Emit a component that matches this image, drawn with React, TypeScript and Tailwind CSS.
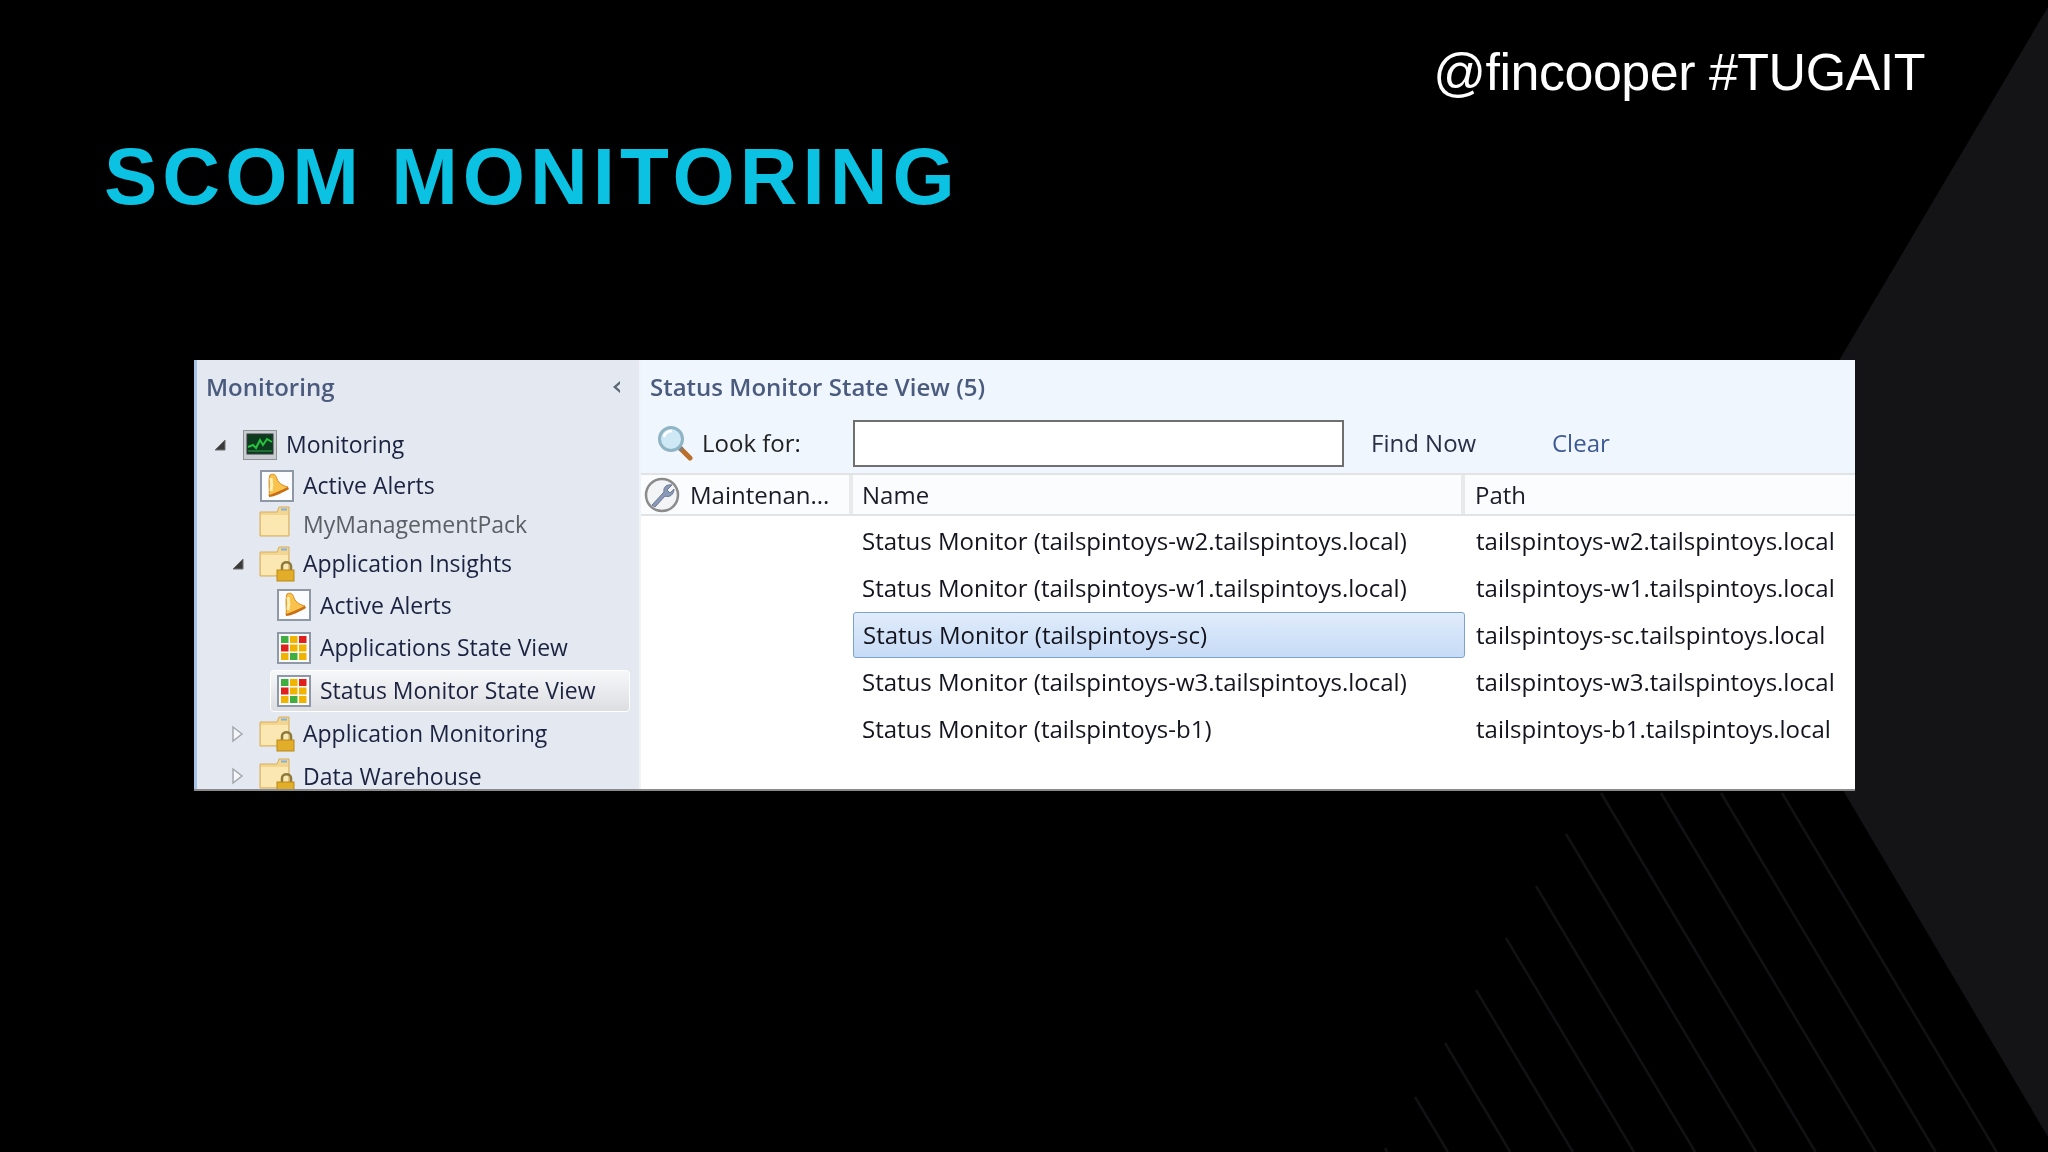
const uiFont = "font-['Open_Sans','Noto_Sans',sans-serif]";

const Triangle = ({ open, className }: { open: boolean; className: string }) =>
  open ? (
    <svg viewBox="0 0 14 14" className={`w-[14px] h-[14px] shrink-0 ${className}`}>
      <path d="M12 2V12H2Z" fill="#3a3a3a" stroke="#6e6e6e" />
    </svg>
  ) : (
    <svg viewBox="0 0 14 18" className={`w-[14px] h-[18px] shrink-0 ${className}`}>
      <path d="M2 2L11 9L2 16Z" fill="#f4f6fa" stroke="#a4a8ae" strokeWidth="1.5" />
    </svg>
  );

const MonitorIcon = () => (
  <svg viewBox="0 0 34 30" className="w-[34px] h-[30px] shrink-0">
    <rect x="0.5" y="0.5" width="33" height="29" fill="#c9ccd0" stroke="#8f9295" />
    <rect x="4" y="4" width="26" height="20" fill="#0d3b1e" stroke="#33383a" />
    <path d="M5 17L10 15L13 18L17 10L20 15L24 9L29 12" fill="none" stroke="#27c23f" strokeWidth="2" />
    <path d="M5 21H29" stroke="#1d6f33" strokeWidth="2" />
  </svg>
);

const BellIcon = () => (
  <svg viewBox="0 0 34 32" className="w-[34px] h-[32px] shrink-0">
    <rect x="1" y="1" width="32" height="30" fill="#fbfcfe" stroke="#8e98a6" strokeWidth="2" />
    <path d="M10 5C14 3 16 5 17 9C19 14 24 16 28 17C24 20 14 24 9 26C10 20 8 10 10 5Z" fill="#f8c24d" stroke="#d98a20" />
    <path d="M9 25C13 24 22 20 28 17L29 19C24 22 14 27 9 27Z" fill="#c86f14" />
    <path d="M11 8C12 12 12 17 11 21" stroke="#fdeeb0" strokeWidth="3" fill="none" />
  </svg>
);

const GridIcon = () => {
  const cells = ["#3fae3f", "#f0b400", "#e0201c", "#e0201c", "#f0b400", "#f0b400", "#f0b400", "#3fae3f", "#f0b400"];
  return (
    <svg viewBox="0 0 34 32" className="w-[34px] h-[32px] shrink-0">
      <rect x="1" y="1" width="32" height="30" fill="#fbfcfe" stroke="#8e98a6" strokeWidth="2" />
      {cells.map((c, i) => (
        <rect key={i} x={4 + (i % 3) * 9} y={4 + Math.floor(i / 3) * 8.5} width="7.5" height="7" fill={c} />
      ))}
    </svg>
  );
};

const FolderIcon = ({ lock }: { lock?: boolean }) => (
  <svg viewBox="0 0 36 36" className="w-[36px] h-[36px] shrink-0 overflow-visible">
    <path d="M1 6H18L20 1H30V30H1Z" fill="#f3d58e" stroke="#d9ae5d" />
    <path d="M2 9H29V29H2Z" fill="#fbe7b2" />
    <rect x="22" y="2.5" width="6" height="2" fill="#7fb2e6" />
    {lock && (
      <g>
        <path d="M23 24V20C23 15 32 15 32 20V24" fill="none" stroke="#8d7a3b" strokeWidth="2.5" />
        <rect x="18" y="24" width="17" height="11" fill="#e2ad28" stroke="#b98717" />
      </g>
    )}
  </svg>
);

const MagnifierIcon = () => (
  <svg viewBox="0 0 36 36" className="w-[36px] h-[36px] shrink-0">
    <path d="M22 22L33 33" stroke="#b9702a" strokeWidth="5" strokeLinecap="round" />
    <path d="M21 21L25 25" stroke="#7f7f7f" strokeWidth="5" />
    <circle cx="14" cy="14" r="11.5" fill="#cfe8f5" stroke="#8fb4c4" strokeWidth="3" />
    <path d="M7 12C8 8 11 6 15 6" stroke="#ffffff" strokeWidth="2.5" fill="none" />
  </svg>
);

const WrenchIcon = () => (
  <svg viewBox="0 0 36 36" className="w-[36px] h-[36px] shrink-0">
    <circle cx="18" cy="18" r="16" fill="#f3f4f6" stroke="#8b8b8b" strokeWidth="2.5" />
    <path d="M8 28L20 15C19 10 23 7 28 8L23 13L26 16L30 12C30 17 26 21 21 19L11 30Z" fill="#8b9ab8" stroke="#6b7790" />
  </svg>
);

type TreeRow = {
  label: string;
  indent: string;
  height: string;
  icon: "monitor" | "bell" | "grid" | "folder" | "lockfolder";
  caret?: "open" | "closed";
  muted?: boolean;
  selected?: boolean;
};

const treeRows: TreeRow[] = [
  { label: "Monitoring", indent: "pl-[46px]", height: "h-[43px]", icon: "monitor" },
  { label: "Active Alerts", indent: "pl-[63px]", height: "h-[39px]", icon: "bell" },
  { label: "MyManagementPack", indent: "pl-[63px]", height: "h-[38px]", icon: "folder", muted: true },
  { label: "Application Insights", indent: "pl-[63px]", height: "h-[41px]", icon: "lockfolder", caret: "open" },
  { label: "Active Alerts", indent: "pl-[80px]", height: "h-[42px]", icon: "bell" },
  { label: "Applications State View", indent: "pl-[80px]", height: "h-[43px]", icon: "grid" },
  { label: "Status Monitor State View", indent: "pl-[80px]", height: "h-[43px]", icon: "grid", selected: true },
  { label: "Application Monitoring", indent: "pl-[63px]", height: "h-[43px]", icon: "lockfolder", caret: "closed" },
  { label: "Data Warehouse", indent: "pl-[63px]", height: "h-[42px]", icon: "lockfolder", caret: "closed" },
];

const tableRows = [
  { name: "Status Monitor (tailspintoys-w2.tailspintoys.local)", path: "tailspintoys-w2.tailspintoys.local" },
  { name: "Status Monitor (tailspintoys-w1.tailspintoys.local)", path: "tailspintoys-w1.tailspintoys.local" },
  { name: "Status Monitor (tailspintoys-sc)", path: "tailspintoys-sc.tailspintoys.local", selected: true },
  { name: "Status Monitor (tailspintoys-w3.tailspintoys.local)", path: "tailspintoys-w3.tailspintoys.local" },
  { name: "Status Monitor (tailspintoys-b1)", path: "tailspintoys-b1.tailspintoys.local" },
];

const TreeIcon = ({ icon }: { icon: TreeRow["icon"] }) => {
  if (icon === "monitor") return <MonitorIcon />;
  if (icon === "bell") return <BellIcon />;
  if (icon === "grid") return <GridIcon />;
  if (icon === "lockfolder") return <FolderIcon lock />;
  return <FolderIcon />;
};

const Sidebar = () => (
  <aside className="w-[447px] h-full bg-[#e3e8f1] border-l-[3px] border-[#a5c3e6] overflow-hidden shrink-0 border-r-2 border-r-[#f0f3f8]">
    <div className="h-[54px] flex items-center justify-between pl-[9px] pr-[17px]">
      <span className="text-[24px] font-semibold text-[#4a5b7e]">Monitoring</span>
      <svg viewBox="0 0 12 14" className="w-[12px] h-[14px]">
        <path d="M10 1L3 7L10 13V10L6.5 7L10 4Z" fill="#5d6675" />
      </svg>
    </div>
    <div className="h-[9px]" />
    {treeRows.map((row, i) => (
      <div key={i} className={`relative flex items-center ${row.height} ${row.indent}`}>
        {row.selected && (
          <div className="absolute left-[73px] right-[9px] top-[1px] bottom-0 rounded-[4px] border border-white bg-gradient-to-b from-[#f6f7f9] to-[#dcdee2]" />
        )}
        {row.caret && (
          <Triangle open={row.caret === "open"} className="absolute left-[34px]" />
        )}
        {i === 0 && <Triangle open className="absolute left-[16px]" />}
        <div className="relative flex items-center gap-[9px]">
          <div className="w-[34px] flex justify-center"><TreeIcon icon={row.icon} /></div>
          <span className={`text-[23px] whitespace-nowrap ${row.muted ? "text-[#5c6066]" : "text-[#1c2340]"}`}>
            {row.label}
          </span>
        </div>
      </div>
    ))}
  </aside>
);

const ResultsPane = () => (
  <section className="flex-1 min-w-0 h-full flex flex-col bg-white">
    <div className="bg-[#f0f6fe]">
      <div className="h-[54px] flex items-center pl-[9px]">
        <span className="text-[24px] font-semibold text-[#4a5b7e] whitespace-nowrap">Status Monitor State View (5)</span>
      </div>
      <div className="h-[59px] flex items-center pb-[1px]">
        <div className="w-[212px] flex items-center pl-[16px] gap-[9px]">
          <MagnifierIcon />
          <span className="text-[24px] text-[#222]">Look for:</span>
        </div>
        <div className="w-[491px] h-[47px] bg-white border-2 border-[#6f6f6f]" />
        <span className="ml-[27px] w-[181px] text-[24px] text-[#2a2f45]">Find Now</span>
        <span className="text-[24px] text-[#3d5a94]">Clear</span>
      </div>
    </div>
    <div className="h-[43px] flex bg-[#fbfcfe] border-y-2 border-[#e2e3e5] text-[24px] text-[#1c1c28] shrink-0">
      <div className="w-[212px] flex items-center gap-[10px] pl-[3px] border-r-4 border-[#e8e9eb]">
        <WrenchIcon />
        <span>Maintenan...</span>
      </div>
      <div className="w-[612px] flex items-center pl-[9px] border-r-4 border-[#e8e9eb]">Name</div>
      <div className="flex-1 flex items-center pl-[10px]">Path</div>
    </div>
    <div className="pt-[1px] text-[24px] text-[#14141e]">
      {tableRows.map((row) => (
        <div key={row.path} className="h-[47px] flex items-center">
          <div className="w-[212px]" />
          <div
            className={`w-[612px] h-[46px] flex items-center pl-[9px] whitespace-nowrap rounded-[3px] ${
              row.selected ? "border border-[#7da2ce] bg-gradient-to-b from-[#e0ecfb] to-[#c6dbf6]" : ""
            }`}
          >
            {row.name}
          </div>
          <div className="flex-1 pl-[11px] whitespace-nowrap">{row.path}</div>
        </div>
      ))}
    </div>
  </section>
);

export default function App() {
  const stripes = [
    [1601, 793], [1661, 793], [1721, 793], [1782, 793],
    [1566, 834], [1536, 886], [1506, 938], [1476, 990],
    [1445, 1043], [1415, 1097], [1385, 1148],
  ];
  return (
    <div className="relative w-full h-[1152px] bg-black overflow-hidden font-['Liberation_Sans',Arial,sans-serif]">
      {/* background shapes */}
      <svg viewBox="0 0 2048 1152" className="absolute inset-0 w-[2048px] h-[1152px]">
        <path d="M2048 7L1714 572L2048 1137Z" fill="#141416" />
        {stripes.map(([x, y]) => (
          <line key={x} x1={x} y1={y} x2={x + (1152 - y) * 0.598} y2={1152} stroke="#121214" strokeWidth="2.5" />
        ))}
      </svg>

      <div className="relative">
        <div className="flex justify-end pr-[123px] pt-[42px] h-[110px]">
          <span className="text-[52px] leading-[60px] text-white tracking-[-0.5px]">@fincooper #TUGAIT</span>
        </div>
        <h1 className="pl-[104px] mt-[32px] text-[80px] leading-[70px] font-bold text-[#0bc2e2] tracking-[5px]">
          SCOM MONITORING
        </h1>
        <div className={`ml-[194px] mt-[148px] w-[1661px] h-[431px] flex border-b-2 border-[#8a8a8a] blur-[0.3px] ${uiFont}`}>
          <Sidebar />
          <ResultsPane />
        </div>
      </div>
    </div>
  );
}
